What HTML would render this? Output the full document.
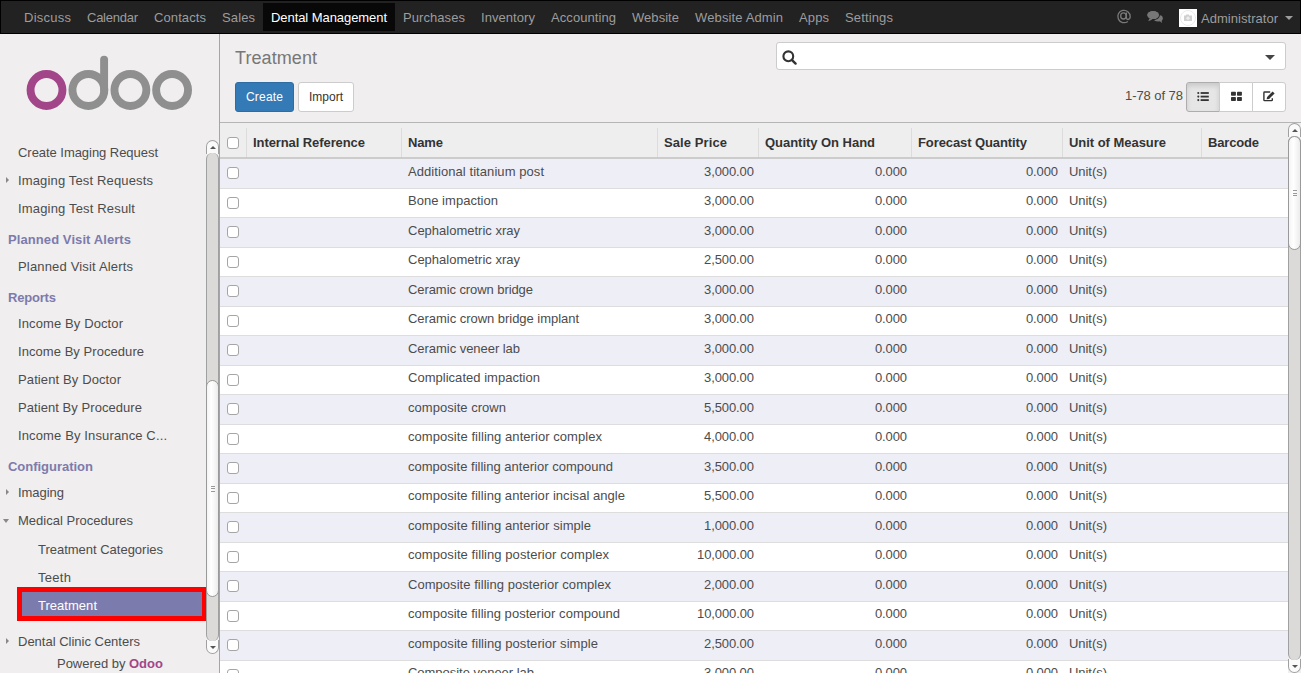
<!DOCTYPE html>
<html><head><meta charset="utf-8"><title>Treatment - Odoo</title><style>
*{box-sizing:border-box}
html,body{margin:0;padding:0;width:1301px;height:673px;overflow:hidden}
body{font-family:"Liberation Sans",sans-serif;font-size:13px;line-height:18px;color:#4c4c4c;background:#f0eeee;position:relative}
.t{white-space:pre}
#nav{position:absolute;left:0;top:0;width:1301px;height:34px;background:#222;border:1px solid #000}
.ni{position:absolute;top:2px;height:28px;padding:6px 8px 4px;color:#9d9d9d;white-space:nowrap;line-height:18px}
.ni.act{background:#080808;color:#fff}
.at{position:absolute;left:1115px;top:6px;font-size:17px;color:#777;line-height:20px}
.chat{position:absolute;left:1147px;top:10px}
.avatar{position:absolute;left:1178px;top:8px;width:18px;height:18px;background:#fff}
.caret{position:absolute;width:0;height:0;border-style:solid;border-color:transparent}
#side{position:absolute;left:0;top:34px;width:220px;height:639px;background:#f0eeee;border-right:1px solid #a5a5a5}
.mi,.mh{position:absolute;white-space:nowrap;line-height:18px}
.mh{font-weight:bold;color:#7c7bad}
.mact{position:absolute;left:17px;top:553px;width:190px;height:34px;background:#7c7bad;border:5px solid #f00}
.tri-r{position:absolute;left:6px;width:0;height:0;border-style:solid;border-color:transparent transparent transparent #888;border-width:3.5px 0 3.5px 3.5px}
.tri-d{position:absolute;left:3px;width:0;height:0;border-style:solid;border-color:#888 transparent transparent transparent;border-width:4px 3.5px 0 3.5px}
.sb{position:absolute;width:13px;background:#f0eeee}
.sbbtn{position:absolute;left:0;width:13px;height:14px;background:#fafafa;border:1px solid #a0a0a0}
.sbbtn.up{top:0;border-radius:6.5px 6.5px 0 0;border-bottom:none}
.sbbtn.dn{bottom:0;border-radius:0 0 6.5px 6.5px;border-top:none}
.sbbtn.up:after{content:"";position:absolute;left:3px;top:5px;border-style:solid;border-color:transparent transparent #555 transparent;border-width:0 3px 3px 3px}
.sbbtn.dn:after{content:"";position:absolute;left:3px;top:6px;border-style:solid;border-color:#555 transparent transparent transparent;border-width:3px 3px 0 3px}
.sbtrack{position:absolute;left:0;width:13px;background:#dcdad8;border-left:1px solid #a0a0a0;border-right:1px solid #a0a0a0;border-radius:6px}
.sbthumb{position:absolute;left:0;width:13px;background:linear-gradient(to right,#f4f4f4,#fff 40%,#ececec);border:1px solid #999;border-radius:6.5px}
.grip{position:absolute;left:4px;top:50%;margin-top:-3px;width:4px;height:6px;border-top:1px solid #999;border-bottom:1px solid #999}
.grip:after{content:"";position:absolute;left:0;top:1.5px;width:4px;height:1px;background:#999}
#main{position:absolute;left:220px;top:34px;width:1081px;height:639px}
.title{position:absolute;left:15px;top:11px;font-size:18px;color:#777;line-height:26px;white-space:nowrap}
.btn{position:absolute;top:48px;height:30px;font-size:12px;line-height:18px;padding:5px 0;text-align:center;border:1px solid #ccc;border-radius:3px;background:#fff;color:#333;white-space:nowrap}
.btn.pri{background:#337ab7;border-color:#2e6da4;color:#fff}
#search{position:absolute;left:556px;top:8px;width:510px;height:28px;background:#fff;border:1px solid #ccc;border-radius:3px}
.pager{position:absolute;white-space:nowrap;color:#4c4c4c}
.vs{position:absolute;top:48px;width:100px;height:30px}
.vb{position:absolute;top:0;height:30px;background:#fff;border:1px solid #ccc}
.vb:first-child{border-radius:3px 0 0 3px}
.vb:last-child{border-radius:0 3px 3px 0}
.vb.on{background:#e6e6e6;box-shadow:inset 0 3px 5px rgba(0,0,0,.125);border-color:#adadad}
#tw{position:absolute;left:0;top:88px;width:1068px;height:551px;overflow:hidden;border-top:1px solid #b5b5b5;background:#fff}
table{border-collapse:collapse;width:1068px;table-layout:fixed}
th{text-align:left;font-weight:bold;color:#333;background:#eee;border-bottom:2px solid #ccc;padding:11px 4px 5px 7px;height:35px;white-space:nowrap;overflow:hidden}
td{border-top:1px solid #ddd;padding:3.5px 4px 6.5px 7px;white-space:nowrap;overflow:hidden;line-height:18.5px}
tbody tr:nth-child(odd){background:#eeeef7}
td.r{text-align:right}
th{position:relative}
th .chk{position:relative;top:-1px}
td .chk{position:relative;top:1px}
th+th:before{content:'';position:absolute;left:0;top:5px;bottom:0;width:1px;background:#dcdcdc}
.chk{display:inline-block;width:12px;height:12px;border:1px solid #a5a5a5;border-radius:3px;background:#fff;vertical-align:middle}
</style></head><body>
<div id="nav">
<div class="ni" style="left:15px;width:63px"><span class="t" style="letter-spacing:0.247px;margin-right:-0.247px">Discuss</span></div>
<div class="ni" style="left:78.0px;width:67px"><span class="t" style="letter-spacing:-0.252px;margin-right:0.252px">Calendar</span></div>
<div class="ni" style="left:145.0px;width:68px"><span class="t" style="letter-spacing:0.098px;margin-right:-0.098px">Contacts</span></div>
<div class="ni" style="left:213.0px;width:49px"><span class="t" style="letter-spacing:0.117px;margin-right:-0.117px">Sales</span></div>
<div class="ni act" style="left:262.0px;width:132px"><span class="t" style="letter-spacing:-0.067px;margin-right:0.067px">Dental Management</span></div>
<div class="ni" style="left:394.0px;width:78px"><span class="t" style="letter-spacing:0.072px;margin-right:-0.072px">Purchases</span></div>
<div class="ni" style="left:472.0px;width:70px"><span class="t" style="letter-spacing:0.064px;margin-right:-0.064px">Inventory</span></div>
<div class="ni" style="left:542.0px;width:81px"><span class="t" style="letter-spacing:0.075px;margin-right:-0.075px">Accounting</span></div>
<div class="ni" style="left:623.0px;width:63px"><span class="t" style="letter-spacing:0.044px;margin-right:-0.044px">Website</span></div>
<div class="ni" style="left:686.0px;width:104px"><span class="t" style="letter-spacing:0.128px;margin-right:-0.128px">Website Admin</span></div>
<div class="ni" style="left:790.0px;width:46px"><span class="t" style="letter-spacing:0.120px;margin-right:-0.120px">Apps</span></div>
<div class="ni" style="left:836.0px;width:64px"><span class="t" style="letter-spacing:0.145px;margin-right:-0.145px">Settings</span></div>
<svg style="position:absolute;left:1112px;top:5px" width="22" height="20" viewBox="0 0 22 20"><path d="M13.4 6.6L13.4 11.8Q13.4 13.5 15 13.5Q17.2 13.3 17.2 10.5A6.2 6.2 0 1 0 14.8 15.4" fill="none" stroke="#7a7a7a" stroke-width="1.3"/><ellipse cx="10.4" cy="9.9" rx="2.7" ry="3.1" fill="none" stroke="#7a7a7a" stroke-width="1.3"/></svg>
<svg style="position:absolute;left:1142px;top:5px" width="24" height="20" viewBox="0 0 24 20"><ellipse cx="15.2" cy="12.3" rx="4.6" ry="3.2" fill="#777"/><path d="M16 14.2L18.9 17.1L18.6 13.5Z" fill="#777"/><ellipse cx="10.1" cy="9.1" rx="6.3" ry="4.5" fill="#777" stroke="#222" stroke-width="1.1"/><path d="M6.5 12.6L5.2 15.2L9.6 13.4Z" fill="#777"/><ellipse cx="10.1" cy="9.1" rx="5.8" ry="4" fill="#777"/></svg>
<div class="avatar"><svg width="18" height="18" viewBox="0 0 18 18"><circle cx="9" cy="9" r="7.5" fill="none" stroke="#e4e4e4" stroke-width="0.8"/><rect x="5" y="6.5" width="8" height="5.5" fill="#d0d0d0"/><rect x="7" y="5.5" width="3" height="1.5" fill="#d0d0d0"/><circle cx="9" cy="9.2" r="1.6" fill="#eee"/></svg></div>
<div class="ni" style="left:1192px;width:90px;top:3px"><span class="t" style="letter-spacing:0.035px;margin-right:-0.035px">Administrator</span></div>
<div class="caret" style="left:1284px;top:15px;border-top-color:#9d9d9d;border-width:4px 4px 0 4px"></div>
</div>
<div id="side">
<svg class="logo" width="180" height="60" viewBox="0 0 180 60" style="position:absolute;left:20px;top:18px">
<circle cx="26.5" cy="38" r="15.95" fill="none" stroke="#a24689" stroke-width="7.9"/>
<circle cx="68.4" cy="38" r="15.95" fill="none" stroke="#8f8f8f" stroke-width="7.9"/>
<line x1="84.1" y1="7.6" x2="84.1" y2="38" stroke="#8f8f8f" stroke-width="7.9" stroke-linecap="round"/>
<circle cx="110.4" cy="38" r="15.95" fill="none" stroke="#8f8f8f" stroke-width="7.9"/>
<circle cx="152.1" cy="38" r="15.95" fill="none" stroke="#8f8f8f" stroke-width="7.9"/>
</svg>
<div class="mi" style="top:110px;left:18px"><span class="t" style="letter-spacing:-0.044px;margin-right:0.044px">Create Imaging Request</span></div>
<div class="mi" style="top:138px;left:18px"><span class="t" style="letter-spacing:0.149px;margin-right:-0.149px">Imaging Test Requests</span></div>
<div class="tri-r" style="top:143px"></div>
<div class="mi" style="top:166px;left:18px"><span class="t" style="letter-spacing:0.169px;margin-right:-0.169px">Imaging Test Result</span></div>
<div class="mh" style="top:197px;left:8px"><span class="t" style="letter-spacing:0.086px;margin-right:-0.086px">Planned Visit Alerts</span></div>
<div class="mi" style="top:224px;left:18px"><span class="t" style="letter-spacing:0.169px;margin-right:-0.169px">Planned Visit Alerts</span></div>
<div class="mh" style="top:255px;left:8px"><span class="t" style="letter-spacing:-0.188px;margin-right:0.188px">Reports</span></div>
<div class="mi" style="top:281px;left:18px"><span class="t" style="letter-spacing:0.111px;margin-right:-0.111px">Income By Doctor</span></div>
<div class="mi" style="top:309px;left:18px"><span class="t" style="letter-spacing:0.055px;margin-right:-0.055px">Income By Procedure</span></div>
<div class="mi" style="top:337px;left:18px"><span class="t" style="letter-spacing:0.115px;margin-right:-0.115px">Patient By Doctor</span></div>
<div class="mi" style="top:365px;left:18px"><span class="t" style="letter-spacing:0.060px;margin-right:-0.060px">Patient By Procedure</span></div>
<div class="mi" style="top:393px;left:18px"><span class="t" style="letter-spacing:0.132px;margin-right:-0.132px">Income By Insurance C...</span></div>
<div class="mh" style="top:424px;left:8px"><span class="t" style="letter-spacing:-0.018px;margin-right:0.018px">Configuration</span></div>
<div class="mi" style="top:450px;left:18px"><span class="t" style="letter-spacing:-0.042px;margin-right:0.042px">Imaging</span></div>
<div class="tri-r" style="top:455px"></div>
<div class="mi" style="top:478px;left:18px"><span class="t" style="letter-spacing:0.006px;margin-right:-0.006px">Medical Procedures</span></div>
<div class="tri-d" style="top:485px"></div>
<div class="mi" style="top:507px;left:38px"><span class="t" style="letter-spacing:-0.013px;margin-right:0.013px">Treatment Categories</span></div>
<div class="mi" style="top:535px;left:38px"><span class="t" style="letter-spacing:0.293px;margin-right:-0.293px">Teeth</span></div>
<div class="mact" style="top:553px"></div>
<div class="mi" style="top:563px;left:38px;color:#fff"><span class="t" style="letter-spacing:0.029px;margin-right:-0.029px">Treatment</span></div>
<div class="mi" style="top:599px;left:18px"><span class="t" style="letter-spacing:-0.005px;margin-right:0.005px">Dental Clinic Centers</span></div>
<div class="tri-r" style="top:604px"></div>
<div class="sb" style="left:206px;top:106px;height:514px"><div class="sbbtn up"></div><div class="sbbtn dn"></div><div class="sbtrack" style="top:13px;bottom:13px"></div><div class="sbthumb" style="top:240px;height:217px"><i class="grip"></i></div></div>
<div class="mi" style="top:621px;left:57px"><span class="t" style="letter-spacing:-0.027px;margin-right:0.027px">Powered by </span><b style="color:#a24689"><span class="t" style="letter-spacing:0.021px;margin-right:-0.021px">Odoo</span></b></div>
</div>
<div id="main">
<div class="title"><span class="t" style="letter-spacing:0.078px;margin-right:-0.078px">Treatment</span></div>
<div class="btn pri" style="left:15px;width:59px"><span class="t" style="letter-spacing:0.194px;margin-right:-0.194px">Create</span></div>
<div class="btn" style="left:78px;width:56px"><span class="t" style="letter-spacing:-0.003px;margin-right:0.003px">Import</span></div>
<div id="search"><svg width="16" height="16" viewBox="0 0 16 16" style="position:absolute;left:5px;top:7px"><circle cx="6.3" cy="6.3" r="4.9" fill="none" stroke="#333" stroke-width="2.1"/><line x1="9.8" y1="9.8" x2="13.6" y2="13.6" stroke="#333" stroke-width="2.4" stroke-linecap="round"/></svg><div class="caret" style="left:488px;top:12px;border-top-color:#444;border-width:5px 5px 0 5px"></div></div>
<div class="pager" style="left:905px;top:53px"><span class="t" style="letter-spacing:-0.061px;margin-right:0.061px">1-78 of 78</span></div>
<div class="vs" style="left:966px"><div class="vb on" style="left:0;width:34px"></div><div class="vb" style="left:33px;width:34px"></div><div class="vb" style="left:66px;width:34px"></div></div>
<div id="tw"><table><colgroup><col style="width:26px"><col style="width:155px"><col style="width:256px"><col style="width:101px"><col style="width:153px"><col style="width:151px"><col style="width:139px"><col></colgroup>
<thead><tr><th class="cb"><i class="chk"></i></th><th><span class="t" style="letter-spacing:-0.085px;margin-right:0.085px">Internal Reference</span></th><th><span class="t" style="letter-spacing:-0.141px;margin-right:0.141px">Name</span></th><th><span class="t" style="letter-spacing:0.094px;margin-right:-0.094px">Sale Price</span></th><th><span class="t" style="letter-spacing:-0.033px;margin-right:0.033px">Quantity On Hand</span></th><th><span class="t" style="letter-spacing:-0.096px;margin-right:0.096px">Forecast Quantity</span></th><th><span class="t" style="letter-spacing:-0.037px;margin-right:0.037px">Unit of Measure</span></th><th><span class="t" style="letter-spacing:-0.172px;margin-right:0.172px">Barcode</span></th></tr></thead><tbody>
<tr><td class="cb"><i class="chk"></i></td><td></td><td><span class="t" style="letter-spacing:0.069px;margin-right:-0.069px">Additional titanium post</span></td><td class="r"><span class="t" style="letter-spacing:-0.087px;margin-right:0.087px">3,000.00</span></td><td class="r"><span class="t" style="letter-spacing:-0.137px;margin-right:0.137px">0.000</span></td><td class="r"><span class="t" style="letter-spacing:-0.137px;margin-right:0.137px">0.000</span></td><td><span class="t" style="letter-spacing:-0.047px;margin-right:0.047px">Unit(s)</span></td><td></td></tr>
<tr><td class="cb"><i class="chk"></i></td><td></td><td><span class="t" style="letter-spacing:0.029px;margin-right:-0.029px">Bone impaction</span></td><td class="r"><span class="t" style="letter-spacing:-0.087px;margin-right:0.087px">3,000.00</span></td><td class="r"><span class="t" style="letter-spacing:-0.137px;margin-right:0.137px">0.000</span></td><td class="r"><span class="t" style="letter-spacing:-0.137px;margin-right:0.137px">0.000</span></td><td><span class="t" style="letter-spacing:-0.047px;margin-right:0.047px">Unit(s)</span></td><td></td></tr>
<tr><td class="cb"><i class="chk"></i></td><td></td><td><span class="t" style="letter-spacing:0.000px;margin-right:-0.000px">Cephalometric xray</span></td><td class="r"><span class="t" style="letter-spacing:-0.087px;margin-right:0.087px">3,000.00</span></td><td class="r"><span class="t" style="letter-spacing:-0.137px;margin-right:0.137px">0.000</span></td><td class="r"><span class="t" style="letter-spacing:-0.137px;margin-right:0.137px">0.000</span></td><td><span class="t" style="letter-spacing:-0.047px;margin-right:0.047px">Unit(s)</span></td><td></td></tr>
<tr><td class="cb"><i class="chk"></i></td><td></td><td><span class="t" style="letter-spacing:0.000px;margin-right:-0.000px">Cephalometric xray</span></td><td class="r"><span class="t" style="letter-spacing:-0.087px;margin-right:0.087px">2,500.00</span></td><td class="r"><span class="t" style="letter-spacing:-0.137px;margin-right:0.137px">0.000</span></td><td class="r"><span class="t" style="letter-spacing:-0.137px;margin-right:0.137px">0.000</span></td><td><span class="t" style="letter-spacing:-0.047px;margin-right:0.047px">Unit(s)</span></td><td></td></tr>
<tr><td class="cb"><i class="chk"></i></td><td></td><td><span class="t" style="letter-spacing:-0.076px;margin-right:0.076px">Ceramic crown bridge</span></td><td class="r"><span class="t" style="letter-spacing:-0.087px;margin-right:0.087px">3,000.00</span></td><td class="r"><span class="t" style="letter-spacing:-0.137px;margin-right:0.137px">0.000</span></td><td class="r"><span class="t" style="letter-spacing:-0.137px;margin-right:0.137px">0.000</span></td><td><span class="t" style="letter-spacing:-0.047px;margin-right:0.047px">Unit(s)</span></td><td></td></tr>
<tr><td class="cb"><i class="chk"></i></td><td></td><td><span class="t" style="letter-spacing:-0.035px;margin-right:0.035px">Ceramic crown bridge implant</span></td><td class="r"><span class="t" style="letter-spacing:-0.087px;margin-right:0.087px">3,000.00</span></td><td class="r"><span class="t" style="letter-spacing:-0.137px;margin-right:0.137px">0.000</span></td><td class="r"><span class="t" style="letter-spacing:-0.137px;margin-right:0.137px">0.000</span></td><td><span class="t" style="letter-spacing:-0.047px;margin-right:0.047px">Unit(s)</span></td><td></td></tr>
<tr><td class="cb"><i class="chk"></i></td><td></td><td><span class="t" style="letter-spacing:-0.042px;margin-right:0.042px">Ceramic veneer lab</span></td><td class="r"><span class="t" style="letter-spacing:-0.087px;margin-right:0.087px">3,000.00</span></td><td class="r"><span class="t" style="letter-spacing:-0.137px;margin-right:0.137px">0.000</span></td><td class="r"><span class="t" style="letter-spacing:-0.137px;margin-right:0.137px">0.000</span></td><td><span class="t" style="letter-spacing:-0.047px;margin-right:0.047px">Unit(s)</span></td><td></td></tr>
<tr><td class="cb"><i class="chk"></i></td><td></td><td><span class="t" style="letter-spacing:0.024px;margin-right:-0.024px">Complicated impaction</span></td><td class="r"><span class="t" style="letter-spacing:-0.087px;margin-right:0.087px">3,000.00</span></td><td class="r"><span class="t" style="letter-spacing:-0.137px;margin-right:0.137px">0.000</span></td><td class="r"><span class="t" style="letter-spacing:-0.137px;margin-right:0.137px">0.000</span></td><td><span class="t" style="letter-spacing:-0.047px;margin-right:0.047px">Unit(s)</span></td><td></td></tr>
<tr><td class="cb"><i class="chk"></i></td><td></td><td><span class="t" style="letter-spacing:0.032px;margin-right:-0.032px">composite crown</span></td><td class="r"><span class="t" style="letter-spacing:-0.087px;margin-right:0.087px">5,500.00</span></td><td class="r"><span class="t" style="letter-spacing:-0.137px;margin-right:0.137px">0.000</span></td><td class="r"><span class="t" style="letter-spacing:-0.137px;margin-right:0.137px">0.000</span></td><td><span class="t" style="letter-spacing:-0.047px;margin-right:0.047px">Unit(s)</span></td><td></td></tr>
<tr><td class="cb"><i class="chk"></i></td><td></td><td><span class="t" style="letter-spacing:0.054px;margin-right:-0.054px">composite filling anterior complex</span></td><td class="r"><span class="t" style="letter-spacing:-0.087px;margin-right:0.087px">4,000.00</span></td><td class="r"><span class="t" style="letter-spacing:-0.137px;margin-right:0.137px">0.000</span></td><td class="r"><span class="t" style="letter-spacing:-0.137px;margin-right:0.137px">0.000</span></td><td><span class="t" style="letter-spacing:-0.047px;margin-right:0.047px">Unit(s)</span></td><td></td></tr>
<tr><td class="cb"><i class="chk"></i></td><td></td><td><span class="t" style="letter-spacing:0.015px;margin-right:-0.015px">composite filling anterior compound</span></td><td class="r"><span class="t" style="letter-spacing:-0.087px;margin-right:0.087px">3,500.00</span></td><td class="r"><span class="t" style="letter-spacing:-0.137px;margin-right:0.137px">0.000</span></td><td class="r"><span class="t" style="letter-spacing:-0.137px;margin-right:0.137px">0.000</span></td><td><span class="t" style="letter-spacing:-0.047px;margin-right:0.047px">Unit(s)</span></td><td></td></tr>
<tr><td class="cb"><i class="chk"></i></td><td></td><td><span class="t" style="letter-spacing:0.042px;margin-right:-0.042px">composite filling anterior incisal angle</span></td><td class="r"><span class="t" style="letter-spacing:-0.087px;margin-right:0.087px">5,500.00</span></td><td class="r"><span class="t" style="letter-spacing:-0.137px;margin-right:0.137px">0.000</span></td><td class="r"><span class="t" style="letter-spacing:-0.137px;margin-right:0.137px">0.000</span></td><td><span class="t" style="letter-spacing:-0.047px;margin-right:0.047px">Unit(s)</span></td><td></td></tr>
<tr><td class="cb"><i class="chk"></i></td><td></td><td><span class="t" style="letter-spacing:0.051px;margin-right:-0.051px">composite filling anterior simple</span></td><td class="r"><span class="t" style="letter-spacing:-0.087px;margin-right:0.087px">1,000.00</span></td><td class="r"><span class="t" style="letter-spacing:-0.137px;margin-right:0.137px">0.000</span></td><td class="r"><span class="t" style="letter-spacing:-0.137px;margin-right:0.137px">0.000</span></td><td><span class="t" style="letter-spacing:-0.047px;margin-right:0.047px">Unit(s)</span></td><td></td></tr>
<tr><td class="cb"><i class="chk"></i></td><td></td><td><span class="t" style="letter-spacing:0.068px;margin-right:-0.068px">composite filling posterior complex</span></td><td class="r"><span class="t" style="letter-spacing:-0.105px;margin-right:0.105px">10,000.00</span></td><td class="r"><span class="t" style="letter-spacing:-0.137px;margin-right:0.137px">0.000</span></td><td class="r"><span class="t" style="letter-spacing:-0.137px;margin-right:0.137px">0.000</span></td><td><span class="t" style="letter-spacing:-0.047px;margin-right:0.047px">Unit(s)</span></td><td></td></tr>
<tr><td class="cb"><i class="chk"></i></td><td></td><td><span class="t" style="letter-spacing:0.041px;margin-right:-0.041px">Composite filling posterior complex</span></td><td class="r"><span class="t" style="letter-spacing:-0.087px;margin-right:0.087px">2,000.00</span></td><td class="r"><span class="t" style="letter-spacing:-0.137px;margin-right:0.137px">0.000</span></td><td class="r"><span class="t" style="letter-spacing:-0.137px;margin-right:0.137px">0.000</span></td><td><span class="t" style="letter-spacing:-0.047px;margin-right:0.047px">Unit(s)</span></td><td></td></tr>
<tr><td class="cb"><i class="chk"></i></td><td></td><td><span class="t" style="letter-spacing:0.029px;margin-right:-0.029px">composite filling posterior compound</span></td><td class="r"><span class="t" style="letter-spacing:-0.105px;margin-right:0.105px">10,000.00</span></td><td class="r"><span class="t" style="letter-spacing:-0.137px;margin-right:0.137px">0.000</span></td><td class="r"><span class="t" style="letter-spacing:-0.137px;margin-right:0.137px">0.000</span></td><td><span class="t" style="letter-spacing:-0.047px;margin-right:0.047px">Unit(s)</span></td><td></td></tr>
<tr><td class="cb"><i class="chk"></i></td><td></td><td><span class="t" style="letter-spacing:0.065px;margin-right:-0.065px">composite filling posterior simple</span></td><td class="r"><span class="t" style="letter-spacing:-0.087px;margin-right:0.087px">2,500.00</span></td><td class="r"><span class="t" style="letter-spacing:-0.137px;margin-right:0.137px">0.000</span></td><td class="r"><span class="t" style="letter-spacing:-0.137px;margin-right:0.137px">0.000</span></td><td><span class="t" style="letter-spacing:-0.047px;margin-right:0.047px">Unit(s)</span></td><td></td></tr>
<tr><td class="cb"><i class="chk"></i></td><td></td><td><span class="t" style="letter-spacing:-0.025px;margin-right:0.025px">Composite veneer lab</span></td><td class="r"><span class="t" style="letter-spacing:-0.087px;margin-right:0.087px">3,000.00</span></td><td class="r"><span class="t" style="letter-spacing:-0.137px;margin-right:0.137px">0.000</span></td><td class="r"><span class="t" style="letter-spacing:-0.137px;margin-right:0.137px">0.000</span></td><td><span class="t" style="letter-spacing:-0.047px;margin-right:0.047px">Unit(s)</span></td><td></td></tr>
<tr><td class="cb"><i class="chk"></i></td><td></td><td><span class="t" style="letter-spacing:-0.025px;margin-right:0.025px">Composite veneer lab</span></td><td class="r"><span class="t" style="letter-spacing:-0.087px;margin-right:0.087px">3,000.00</span></td><td class="r"><span class="t" style="letter-spacing:-0.137px;margin-right:0.137px">0.000</span></td><td class="r"><span class="t" style="letter-spacing:-0.137px;margin-right:0.137px">0.000</span></td><td><span class="t" style="letter-spacing:-0.047px;margin-right:0.047px">Unit(s)</span></td><td></td></tr>
</tbody></table></div>
<div style="position:absolute;left:0;top:88px;width:1081px;height:1px;background:#b5b5b5"></div>
<div class="sb" style="left:1068px;top:89px;height:550px"><div class="sbbtn up"></div><div class="sbbtn dn"></div><div class="sbtrack" style="top:13px;bottom:13px"></div><div class="sbthumb" style="top:13px;height:114px"><i class="grip"></i></div></div>
</div>
<svg style="position:absolute;left:1196px;top:91px" width="14" height="11" viewBox="0 0 14 11"><circle cx="2.3" cy="2" r="1.05" fill="#333"/><circle cx="2.3" cy="5.6" r="1.05" fill="#333"/><circle cx="2.3" cy="9.1" r="1.05" fill="#333"/><rect x="4.6" y="1.1" width="8.2" height="1.8" fill="#333"/><rect x="4.6" y="4.7" width="8.2" height="1.8" fill="#333"/><rect x="4.6" y="8.2" width="8.2" height="1.8" fill="#333"/></svg>
<svg style="position:absolute;left:1230px;top:91px" width="13" height="11" viewBox="0 0 13 11"><rect x="1" y="0.7" width="4.9" height="4" rx="0.7" fill="#333"/><rect x="7" y="0.7" width="4.9" height="4" rx="0.7" fill="#333"/><rect x="1" y="6" width="4.9" height="4" rx="0.7" fill="#333"/><rect x="7" y="6" width="4.9" height="4" rx="0.7" fill="#333"/></svg>
<svg style="position:absolute;left:1262px;top:90px" width="14" height="12" viewBox="0 0 14 12"><path d="M8.2 2H2.6Q1.9 2 1.9 2.7V9.9Q1.9 10.6 2.6 10.6H9.6Q10.3 10.6 10.3 9.9V8.3" fill="none" stroke="#333" stroke-width="1.4"/><path d="M4.6 9.2L5.1 6.9L10.6 1.4L12.6 3.4L7.1 8.9Z" fill="#333"/></svg>
</body></html>
